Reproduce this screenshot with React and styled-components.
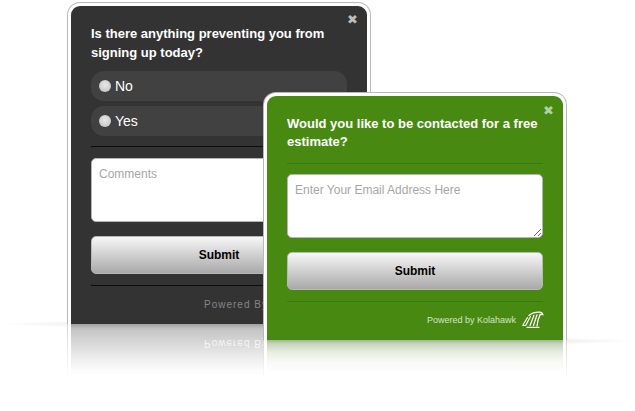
import React from "react";
import styled, { createGlobalStyle } from "styled-components";

const Global = createGlobalStyle`
  html, body { margin: 0; padding: 0; background: #fff; }
  body { font-family: "Liberation Sans", Arial, sans-serif; overflow: hidden; }
`;

const themes = {
  dark: {
    bg: "#333333", rule: "#0c0c0c", foot: "#84858a", frame: "#b9b9b9",
    reflect: "linear-gradient(#a0a0a0 0, #c4c4c4 5px, #dcdcdc 22px, #f0f0f0 36px, #fbfbfb 46px, #fff 52px)",
  },
  green: {
    bg: "#488a11", rule: "#3a7a0a", foot: "#d6e4cc", frame: "#b9b9b9",
    reflect: "linear-gradient(#a3b795 0, #c8d6bd 4px, #e6ede0 12px, #f8faf6 22px, #fff 34px)",
  },
};

const Stage = styled.div`
  position: relative;
  width: 635px;
  height: 411px;
  overflow: hidden;
  background: #fff;
`;

const Floor = styled.div`
  position: absolute;
  left: ${(p) => p.$left}px;
  width: ${(p) => p.$width}px;
  top: ${(p) => p.$top}px;
  height: 8px;
  background: radial-gradient(closest-side, #dcdcdc 0, #efefef 55%, #ffffff 100%);
`;

const Card = styled.section`
  position: absolute;
  box-sizing: border-box;
  left: ${(p) => p.$left}px;
  top: ${(p) => p.$top}px;
  width: 302px;
  height: ${(p) => p.$height}px;
  padding: ${(p) => p.$pad}px 20px 0;
  background: ${(p) => themes[p.$tone].bg};
  border: solid #fff;
  border-width: 3px 3px 0;
  border-radius: 12px 12px 0 0;
  box-shadow: 0 0 0 1px ${(p) => themes[p.$tone].frame};
  display: flex;
  flex-direction: column;
`;

const Close = styled.span`
  position: absolute;
  right: 9px;
  top: ${(p) => p.$top}px;
  font: bold 13px/13px "DejaVu Sans", sans-serif;
  color: ${(p) => (p.$tone === "green" ? "#b4cfa3" : "#bdbdbd")};
`;

const Title = styled.h2`
  margin: 0;
  font: bold 13px/${(p) => p.$lh}px "Liberation Sans", Arial, sans-serif;
  color: #fff;
`;

const Options = styled.div`
  display: flex;
  flex-direction: column;
  gap: 5px;
  margin-top: 9px;
`;

const Option = styled.div`
  height: 30px;
  display: flex;
  align-items: center;
  gap: 4px;
  padding-left: 8px;
  border-radius: 13px;
  background: #414141;
  color: #fff;
  font-size: 14px;
`;

const Dot = styled.i`
  width: 12px;
  height: 12px;
  border-radius: 50%;
  background: radial-gradient(circle at 50% 40%, #e8e8e8, #bdbdbd);
`;

const Rule = styled.hr`
  width: 100%;
  margin: ${(p) => p.$mt}px 0 ${(p) => p.$mb}px;
  border: 0;
  height: 1px;
  background: ${(p) => themes[p.$tone].rule};
`;

const Field = styled.textarea`
  box-sizing: border-box;
  display: block;
  width: 100%;
  height: 64px;
  padding: 8px 7px;
  margin: 0;
  border: 1px solid #b5b5b5;
  border-radius: 5px;
  background: #fff;
  font: 12px/14px "Liberation Sans", Arial, sans-serif;
  outline: none;
  &::placeholder { color: #a6a6a6; opacity: 1; }
`;

const Submit = styled.button`
  display: block;
  box-sizing: border-box;
  width: 100%;
  height: 38px;
  margin: 14px 0 0;
  padding: 0;
  border: 1px solid #b8b8b8;
  border-radius: 5px;
  background: linear-gradient(#f7f7f7, #a9a9a9);
  color: #000;
  font: bold 12px/36px "Liberation Sans", Arial, sans-serif;
`;

const Footer = styled.footer`
  display: flex;
  justify-content: flex-end;
  align-items: center;
  gap: 5px;
  height: 18px;
  margin-right: -1px;
  color: ${(p) => themes[p.$tone].foot};
`;

const Powered = styled.span`
  font-size: ${(p) => p.$size}px;
  letter-spacing: ${(p) => p.$ls}px;
  white-space: nowrap;
`;

const DarkFoot = styled(Footer)`
  justify-content: flex-start;
  padding-left: 113px;
`;

const Reflection = styled.div`
  position: absolute;
  left: -3px;
  right: -3px;
  top: 100%;
  height: ${(p) => p.$height}px;
  box-sizing: border-box;
  border: solid #fff;
  border-width: 0 3px;
  background: ${(p) => themes[p.$tone].reflect};
  &::before, &::after {
    content: "";
    position: absolute;
    top: 0;
    bottom: 0;
    width: 1px;
    background: linear-gradient(#d4d4d4, #ffffff);
  }
  &::before { left: -4px; }
  &::after { right: -4px; }
`;

const Mirror = styled.span`
  position: absolute;
  left: 133px;
  top: 14px;
  font-size: 10px;
  letter-spacing: 1px;
  color: #fff;
  opacity: 0.75;
  transform: scaleY(-1);
`;

const Hawk = () => (
  <svg width="23" height="18" viewBox="0 0 23 18" fill="none" stroke="#fff" strokeLinecap="round" strokeLinejoin="round">
    <path d="M8 4.5C11 2 15 1 19 1.200C20.500 1.300 21.500 2.200 22 3.800C20.800 3 19.500 3.200 18.800 4" strokeWidth="1.300" />
    <path d="M6.500 6.500C5 9 3.200 11.500 1.800 14.500H4.600C6 12 7.500 9 9.500 5.500" strokeWidth="1.100" />
    <path d="M13 4.200L9 14.500" strokeWidth="1.200" />
    <path d="M16 3.800L12.500 14.500" strokeWidth="1.200" />
    <path d="M19 4C17.500 7 16.300 11 16 15" strokeWidth="1.200" />
    <path d="M6 16.300H18" strokeWidth="1.300" />
  </svg>
);

export default function App() {
  return (
    <Stage>
      <Global />
      <Floor $left={0} $width={400} $top={320} />
      <Floor $left={300} $width={335} $top={337} />
      <Card $tone="dark" $left={68} $top={3} $height={321} $pad={18}>
        <Close $tone="dark" $top={7}>✖</Close>
        <Title $lh={19}>Is there anything preventing you from signing up today?</Title>
        <Options>
          <Option><Dot />No</Option>
          <Option><Dot />Yes</Option>
        </Options>
        <Rule $tone="dark" $mt={10} $mb={11} />
        <Field placeholder="Comments" />
        <Submit>Submit</Submit>
        <Rule $tone="dark" $mt={11} $mb={9} />
        <DarkFoot $tone="dark"><Powered $size={10} $ls={1}>Powered By</Powered></DarkFoot>
        <Reflection $tone="dark" $height={56}><Mirror>Powered By</Mirror></Reflection>
      </Card>
      <Card $tone="green" $left={264} $top={93} $height={247} $pad={19}>
        <Close $tone="green" $top={8}>✖</Close>
        <Title $lh={18}>Would you like to be contacted for a free estimate?</Title>
        <Rule $tone="green" $mt={12} $mb={10} />
        <Field placeholder="Enter Your Email Address Here" />
        <Submit>Submit</Submit>
        <Rule $tone="green" $mt={11} $mb={9} />
        <Footer $tone="green"><Powered $size={9} $ls={0}>Powered by Kolahawk</Powered><Hawk /></Footer>
        <Reflection $tone="green" $height={40} />
      </Card>
    </Stage>
  );
}
